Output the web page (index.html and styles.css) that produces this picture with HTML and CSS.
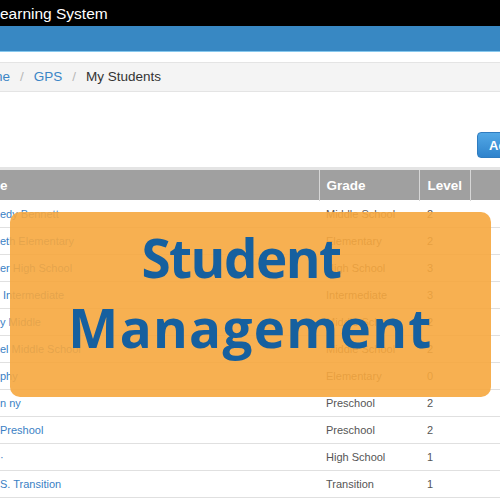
FILE: index.html
```html
<!DOCTYPE html>
<html>
<head>
<meta charset="utf-8">
<link rel="stylesheet" href="styles.css">
</head>
<body>
<div class="page">
  <header class="topbar">earning System</header>
  <nav class="navbar"></nav>
  <div class="crumbs">
    <a class="crumb-link crumb-first">ne</a><span class="sep">/</span><a class="crumb-link">GPS</a><span class="sep">/</span><span class="crumb-current">My Students</span>
  </div>
  <div class="toolbar"><button class="btn-add">Add</button></div>
  <table class="grid">
    <thead>
      <tr><th class="c-name">e</th><th class="c-grade">Grade</th><th class="c-level">Level</th><th class="c-act"></th></tr>
    </thead>
    <tbody>
      <tr><td class="c-name"><a>edy Bennett</a></td><td>Middle School</td><td>2</td><td></td></tr>
      <tr><td class="c-name"><a>eth Elementary</a></td><td>Elementary</td><td>2</td><td></td></tr>
      <tr><td class="c-name"><a>er High School</a></td><td>High School</td><td>3</td><td></td></tr>
      <tr><td class="c-name"><a>&nbsp;Intermediate</a></td><td>Intermediate</td><td>3</td><td></td></tr>
      <tr><td class="c-name"><a>y Middle</a></td><td>Middle School</td><td>2</td><td></td></tr>
      <tr><td class="c-name"><a>el Middle School</a></td><td>Middle School</td><td>2</td><td></td></tr>
      <tr><td class="c-name"><a>phy</a></td><td>Elementary</td><td>0</td><td></td></tr>
      <tr><td class="c-name"><a>n ny</a></td><td>Preschool</td><td>2</td><td></td></tr>
      <tr><td class="c-name"><a>Preshool</a></td><td>Preschool</td><td>2</td><td></td></tr>
      <tr><td class="c-name"><a>·</a></td><td>High School</td><td>1</td><td></td></tr>
      <tr><td class="c-name"><a>S. Transition</a></td><td>Transition</td><td>1</td><td></td></tr>
    </tbody>
  </table>
  <div class="banner">
    <div class="banner-line line-student">Student</div>
    <div class="banner-line line-mgmt">Management</div>
  </div>
</div>
</body>
</html>
```

FILE: styles.css
```css
html, body {
  margin: 0;
  padding: 0;
  background: #ffffff;
}
.page {
  position: relative;
  width: 500px;
  height: 500px;
  overflow: hidden;
  font-family: "Liberation Sans", Arial, sans-serif;
}
.topbar {
  height: 26px;
  line-height: 27px;
  background: #000000;
  color: #ffffff;
  font-size: 15.5px;
  white-space: nowrap;
}
.navbar {
  height: 25px;
  background: #3888c3;
  border-bottom: 1px solid #86c8ee;
}
.crumbs {
  margin-top: 10px;
  height: 28px;
  line-height: 28px;
  background: #f4f4f4;
  border-top: 1px solid #e4e4e4;
  border-bottom: 1px solid #e4e4e4;
  font-size: 13.5px;
  white-space: nowrap;
}
.crumb-link {
  color: #3a85c6;
}
.crumb-first {
  margin-left: -5px;
}
.sep {
  color: #b8b8b8;
  padding: 0 10px;
}
.crumb-current {
  color: #333333;
}
.toolbar {
  height: 75px;
  display: flex;
  justify-content: flex-end;
  align-items: flex-start;
  box-sizing: border-box;
  padding-top: 40px;
}
.btn-add {
  margin-right: -30px;
  width: 53px;
  height: 26px;
  padding: 0 0 0 11px;
  text-align: left;
  border: 1px solid #2f7cc0;
  border-radius: 4px;
  background: linear-gradient(#52a8e6, #2f83cc);
  color: #ffffff;
  font-family: "Liberation Sans", Arial, sans-serif;
  font-weight: bold;
  font-size: 13px;
}
.grid {
  width: 500px;
  border-collapse: collapse;
  table-layout: fixed;
  border-top: 3px solid #e4e4e4;
  font-size: 11px;
}
.grid th {
  height: 32px;
  padding: 0 7px;
  background: #a0a0a0;
  color: #ffffff;
  font-size: 13.5px;
  font-weight: bold;
  text-align: left;
  border-left: 1px solid #d6d6d6;
  box-sizing: border-box;
}
.grid th.c-name {
  border-left: none;
  padding-left: 0;
  width: 319px;
}
.grid th.c-grade { width: 100px; }
.grid th.c-level { width: 51px; padding-left: 8px; }
.grid td {
  height: 26px;
  padding: 0 7px;
  color: #555555;
  border-bottom: 1px solid #e0e0e0;
  white-space: nowrap;
}
.grid td:nth-child(3) { padding-left: 8px; }
.grid td.c-name {
  padding-left: 0;
}
.grid td a {
  color: #3a7fc4;
}
.grid tbody tr:first-child td {
  border-top: 1px solid #ffffff;
}
.banner {
  position: absolute;
  left: 10px;
  top: 212px;
  width: 481px;
  height: 185px;
  border-radius: 10px;
  background: rgba(246, 167, 62, 0.9);
  display: flex;
  flex-direction: column;
  align-items: center;
  justify-content: flex-start;
  padding-top: 11px;
  box-sizing: border-box;
}
.banner-line {
  font-family: "Open Sans", "Noto Sans", sans-serif;
  font-weight: bold;
  font-size: 53px;
  line-height: 70px;
  color: #16609f;
  white-space: nowrap;
}
.line-student {
  letter-spacing: -1.5px;
  margin-right: 19px;
}
.line-mgmt {
  letter-spacing: 1.3px;
}
```
